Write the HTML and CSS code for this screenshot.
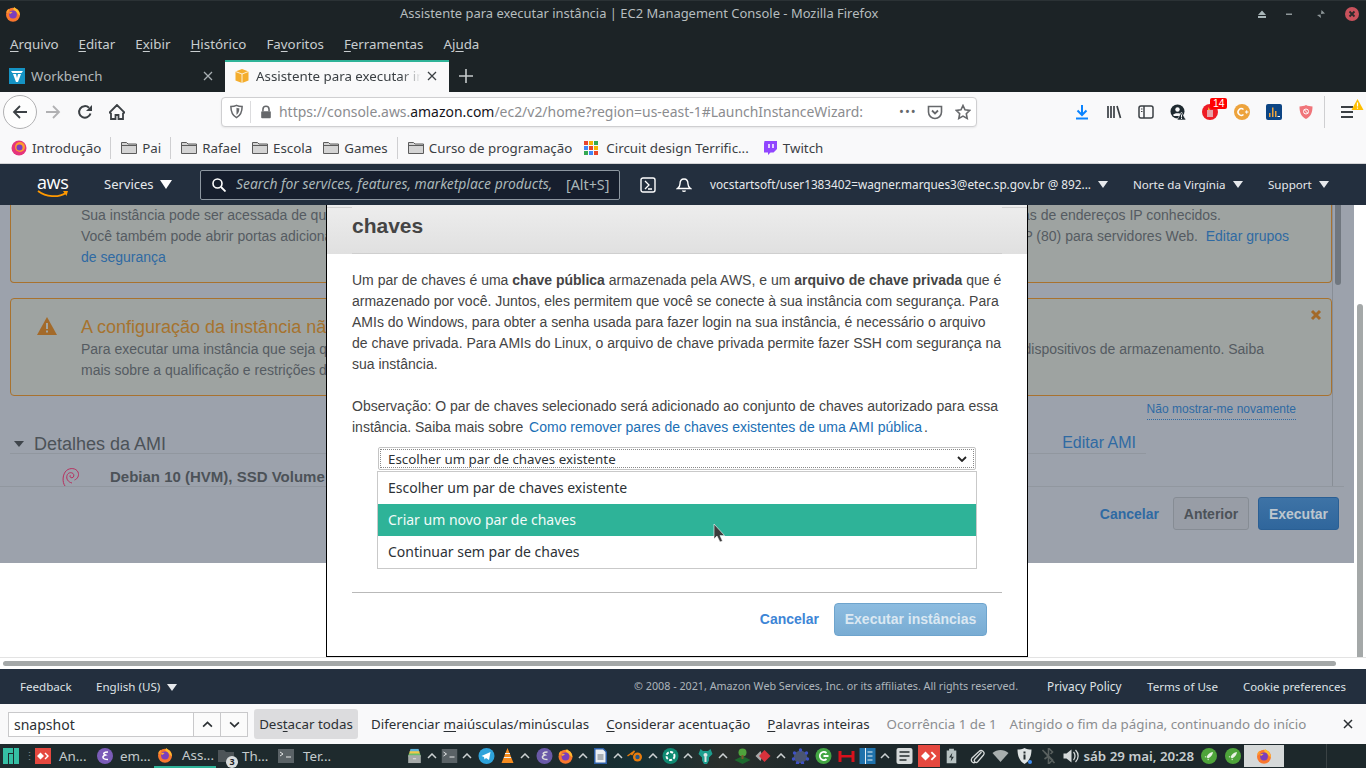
FILE: index.html
```html
<!DOCTYPE html>
<html lang="pt-BR">
<head>
<meta charset="utf-8">
<title>Assistente para executar instância</title>
<link rel="stylesheet" href="styles.css">
</head>
<body>
<svg class="defs" width="0" height="0">
  <symbol id="ff" viewBox="0 0 16 16">
    <circle cx="8" cy="8.800" r="7" fill="#f9772e"/>
    <path d="M9.500 1c.8 1.600 2.500 1.700 3.600 3.300 1.200 1.700 1.900 3.600 1.700 5.300L10 5 8 3z" fill="#ffbd2e"/>
    <path d="M1.200 6.500C1.600 4.500 2.800 3.200 4 2.800 3.800 3.500 3.900 4 4.200 4.500L3 7z" fill="#ff9a2e"/>
    <circle cx="8" cy="8.500" r="3.900" fill="#7b3fbd"/>
    <path d="M4 6.500c2-1.200 3-1 3.500-.3L5 8z" fill="#ffb52e"/>
  </symbol>
  <symbol id="folder" viewBox="0 0 16 16">
    <path d="M.5 13.500v-11h5l1.500 1.500h8.500v9.500z" fill="#d4d4d4" stroke="#5c5c5c"/>
    <path d="M.5 5.500h15" stroke="#5c5c5c"/>
  </symbol>
  <symbol id="chev" viewBox="0 0 10 6">
    <path d="M1 5l4-4 4 4" fill="none" stroke="currentColor" stroke-width="1.500"/>
  </symbol>
  <symbol id="rocket" viewBox="0 0 16 16">
    <circle cx="8" cy="8" r="8" fill="#4ea43a"/>
    <path d="M12 4c-3 .3-5 2-6.500 5l1.500 1.500c3-1.500 4.700-3.500 5-6.500zM5 8l-1.500 1 1.500.5zM8 11l-1 1.500-.5-1.500z" fill="#e9f2e5"/>
  </symbol>
  <symbol id="term" viewBox="0 0 16 16">
    <rect width="16" height="14" y="1" fill="#5a6266"/>
    <path d="M2 4l3 2-3 2" fill="none" stroke="#e4e6e6"/>
    <path d="M8 9h5" stroke="#e4e6e6"/>
  </symbol>
  <symbol id="redapp" viewBox="0 0 16 16">
    <rect width="16" height="16" fill="#e5483f"/>
    <path d="M5.500 4.500L2 8l3.500 3.500L9 8zM10.500 4.500L9.500 5.500 12 8l-2.500 2.500 1 1L14 8z" fill="#fff"/>
  </symbol>
  <symbol id="archive" viewBox="0 0 16 18">
    <path d="M3 0h10l1 4H2z" fill="#5fb4d8"/>
    <path d="M2 3h12l1 4H1z" fill="#f0c94a"/>
    <path d="M1 6h14l1 4H0z" fill="#69bf6a"/>
    <rect y="8" width="16" height="10" fill="#a6aaa9"/>
    <rect x="6" y="12" width="4" height="1" fill="#eee"/>
  </symbol>
</svg>

<header class="titlebar">
  <svg class="ic16 tb-logo"><use href="#ff"/></svg>
  <span class="tb-title">Assistente para executar instância | EC2 Management Console - Mozilla Firefox</span>
  <div class="winbtns">
    <svg class="winbtn" viewBox="0 0 10 10"><path d="M5 1.500L9 6H1zM1 7h8v2H1z" fill="#a9b6b8"/></svg>
    <svg class="winbtn" viewBox="0 0 10 10"><path d="M2 4.500h6v1.500H2z" fill="#8e9799"/></svg>
    <svg class="winbtn" viewBox="0 0 10 10"><path d="M1 6l3.500-.5L5 9zM5 5l.5-4L9 4.500z" fill="#8e9799"/></svg>
    <svg class="winbtn winclose" viewBox="0 0 14 14"><circle cx="7" cy="7" r="7" fill="#c9525c"/><path d="M4.500 4.500l5 5m0-5l-5 5" stroke="#2a2a2a" stroke-width="1.800"/></svg>
  </div>
</header>

<nav class="menubar">
  <span><u>A</u>rquivo</span><span><u>E</u>ditar</span><span>E<u>x</u>ibir</span><span><u>H</u>istórico</span><span>Fa<u>v</u>oritos</span><span><u>F</u>erramentas</span><span>Aj<u>u</u>da</span>
</nav>

<div class="tabbar">
  <div class="tab">
    <svg class="ic16" viewBox="0 0 16 16"><rect width="16" height="16" fill="#1593c4"/><path d="M2 3h12l-1.500 2H3.500zM4 6h3l1 4 1-4h3l-3 8H7z" fill="#fff"/></svg>
    <span class="tab-label">Workbench</span>
    <svg class="tab-x" viewBox="0 0 10 10"><path d="M1 1l8 8m0-8l-8 8" stroke="#a9b0b3" stroke-width="1.300"/></svg>
  </div>
  <div class="tab tab-on">
    <svg class="ic16" viewBox="0 0 16 16"><path d="M8 1l6.500 2.500v9L8 15l-6.500-2.500v-9z" fill="#f4ad2d"/><path d="M1.500 3.500L8 6l6.500-2.500M8 6v9" stroke="#fff" fill="none" stroke-width=".8"/></svg>
    <span class="tab-label tab-fade">Assistente para executar instância</span>
    <svg class="tab-x" viewBox="0 0 10 10"><path d="M1 1l8 8m0-8l-8 8" stroke="#3b4044" stroke-width="1.300"/></svg>
  </div>
  <svg class="tab-plus" viewBox="0 0 14 14"><path d="M7 0v14M0 7h14" stroke="#c5cacb" stroke-width="1.600"/></svg>
</div>

<div class="navbar">
  <div class="backbtn"><svg class="ic16" viewBox="0 0 16 16"><path d="M15 8H2M8 2L2 8l6 6" fill="none" stroke="#3b4044" stroke-width="1.800"/></svg></div>
  <svg class="ic16 nav-fwd" viewBox="0 0 16 16"><path d="M1 8h13M8 2l6 6-6 6" fill="none" stroke="#b1b1b3" stroke-width="1.800"/></svg>
  <svg class="ic16 nav-rel" viewBox="0 0 16 16"><path d="M13.500 9.500A5.800 5.800 0 1 1 12 3.800" fill="none" stroke="#3b4044" stroke-width="2"/><path d="M15 1v6H9z" fill="#3b4044"/></svg>
  <svg class="ic16 nav-home" viewBox="0 0 16 16"><path d="M8 1L.5 8.500 2 9.500V15h4.500v-4h3v4H14V9.500l1.500-1z" fill="none" stroke="#3b4044" stroke-width="1.800"/></svg>
  <div class="urlbar">
    <svg class="ic16 url-shield" viewBox="0 0 16 16"><path d="M8 1.500c2 1 4 1.200 6 1.200 0 5-1 9.300-6 11.800-5-2.500-6-6.800-6-11.800 2 0 4-.2 6-1.200z" fill="none" stroke="#66686b" stroke-width="1.600"/><path d="M8 4c1 .5 2 .6 3 .6 0 3-.6 5.400-3 7z" fill="#66686b"/></svg>
    <span class="url-sep"></span>
    <svg class="ic16 url-lock" viewBox="0 0 16 16"><path d="M4.500 7V5a3.500 3.500 0 0 1 7 0v2" fill="none" stroke="#66686b" stroke-width="1.800"/><rect x="2.500" y="7" width="11" height="8" rx="1" fill="#66686b"/></svg>
    <span class="url-text">https://console.aws.<b>amazon.com</b>/ec2/v2/home?region=us-east-1#LaunchInstanceWizard:</span>
    <span class="url-dots">•••</span>
    <svg class="ic16 url-pocket" viewBox="0 0 16 16"><path d="M1.500 2.500h13V8a6.500 6.500 0 0 1-13 0z" fill="none" stroke="#66686b" stroke-width="1.600"/><path d="M5 6.500l3 3 3-3" fill="none" stroke="#66686b" stroke-width="1.800"/></svg>
    <svg class="ic16 url-star" viewBox="0 0 16 16"><path d="M8 1.500l2 4.300 4.700.6-3.400 3.300.9 4.700L8 12.100l-4.200 2.300.9-4.700L1.300 6.400 6 5.800z" fill="none" stroke="#66686b" stroke-width="1.600"/></svg>
  </div>
  <div class="tools">
    <svg class="ic16" viewBox="0 0 16 16"><path d="M8 1v9M3.500 6.500L8 11l4.500-4.500" fill="none" stroke="#0a84ff" stroke-width="2"/><path d="M2 14.500h12" stroke="#0a84ff" stroke-width="2"/></svg>
    <svg class="ic16" viewBox="0 0 16 16"><path d="M2 2v12M5 2v12M8 2v12M11 2l3.500 12" stroke="#3b4044" stroke-width="1.700" fill="none"/></svg>
    <svg class="ic16" viewBox="0 0 16 16"><rect x="1" y="2" width="14" height="12" rx="2" fill="none" stroke="#3b4044" stroke-width="1.500"/><path d="M6 2v12" stroke="#3b4044" stroke-width="1.500"/><path d="M3 5h1.500M3 7.500h1.500" stroke="#3b4044"/></svg>
    <svg class="ic16" viewBox="0 0 16 16"><circle cx="7.500" cy="7.500" r="7" fill="#1f2a30"/><circle cx="7.500" cy="5.500" r="2.200" fill="#f9f9fa"/><path d="M3 11c1-2.500 8-2.500 9 0l-1 1H4z" fill="#f9f9fa"/><path d="M11.500 8l4.500 8H7z" fill="#1f2a30" stroke="#f9f9fa" stroke-width=".6"/><path d="M11 10.500h1v3h-1zM11 14h1v1h-1z" fill="#f9f9fa"/></svg>
    <span class="tool-badge"><svg class="ic16" viewBox="0 0 16 16"><circle cx="8" cy="8" r="8" fill="#ee1c25"/><rect x="5" y="6" width="6" height="7" fill="#e7a3a8"/><path d="M6.500 3L8 6 6 6z" fill="#f5c23b"/></svg><b class="badge14">14</b></span>
    <svg class="ic16" viewBox="0 0 16 16"><circle cx="8" cy="8" r="8" fill="#eda33c"/><path d="M9.500 5.500a3.300 3.300 0 1 0 0 5" fill="none" stroke="#fff" stroke-width="1.500"/><path d="M11 8h3.500M12.700 6.300v3.400" stroke="#fff"/></svg>
    <svg class="ic16" viewBox="0 0 16 16"><rect width="16" height="16" rx="2" fill="#0d4584"/><path d="M3 13V9h1.500v4zM6 13V3.500h1.500V13zM9 13V7h1.500v6z" fill="#eda33c"/><path d="M11.500 13H14v-1h-2.500z" fill="#fff"/></svg>
    <svg class="ic16" viewBox="0 0 16 16"><path d="M8 1c2 1 4 1.300 6.500 1.500C14.500 8 13 12.500 8 15 3 12.500 1.500 8 1.500 2.500 4 2.300 6 2 8 1z" fill="#f0757a"/><circle cx="8" cy="7.500" r="2.500" fill="none" stroke="#fff"/><path d="M6.300 5.800l3.400 3.400" stroke="#fff"/></svg>
    <span class="tool-sep"></span>
    <span class="tool-menu"><svg class="ic16" viewBox="0 0 16 16"><path d="M2 3h12M2 8h12M2 13h12" stroke="#3b4044" stroke-width="1.800"/></svg><svg class="menu-warn" viewBox="0 0 12 12"><path d="M6 0l6 11H0z" fill="#ffbf00"/><path d="M5.400 3.500h1.200v4H5.400zM5.400 8.500h1.200v1.300H5.400z" fill="#fff"/></svg></span>
  </div>
</div>

<div class="bookmarks">
  <span class="bm"><svg class="ic16" viewBox="0 0 16 16"><circle cx="8" cy="8" r="7.500" fill="#e5357c"/><circle cx="9" cy="7" r="5" fill="#ff9a2e"/><circle cx="8.500" cy="7.500" r="3" fill="#7b3fbd"/></svg>Introdução</span>
  <span class="bm-sep"></span>
  <span class="bm"><svg class="ic16"><use href="#folder"/></svg>Pai</span>
  <span class="bm-sep"></span>
  <span class="bm"><svg class="ic16"><use href="#folder"/></svg>Rafael</span>
  <span class="bm"><svg class="ic16"><use href="#folder"/></svg>Escola</span>
  <span class="bm"><svg class="ic16"><use href="#folder"/></svg>Games</span>
  <span class="bm-sep"></span>
  <span class="bm"><svg class="ic16"><use href="#folder"/></svg>Curso de programação</span>
  <span class="bm bm-wide"><svg class="ic16" viewBox="0 0 16 16"><path d="M1 1h4v4H1z" fill="#e8452c"/><path d="M6 1h4v4H6z" fill="#f5b400"/><path d="M11 1h4v4h-4z" fill="#34a853"/><path d="M1 6h4v4H1z" fill="#4285f4"/><path d="M6 6h4v4H6z" fill="#e8452c"/><path d="M11 6h4v4h-4z" fill="#f5b400"/><path d="M1 11h4v4H1z" fill="#34a853"/><path d="M6 11h4v4H6z" fill="#4285f4"/><path d="M11 11h4v4h-4z" fill="#e8452c"/></svg>Circuit design Terrific...</span>
  <span class="bm bm-tw"><svg class="ic16" viewBox="0 0 16 16"><path d="M2.500 1H15v8l-3.500 3.500H8.500l-2.500 2.500v-2.500H2V3.500z" fill="#9146ff"/><path d="M7 4v4M11 4v4" stroke="#fff" stroke-width="1.500"/></svg>Twitch</span>
</div>

<div class="awsnav">
  <span class="aws-logo"><span class="aws-word">aws</span><svg class="aws-smile" viewBox="0 0 32 9"><path d="M1 1c8 6 20 7 28 2" fill="none" stroke="#f90" stroke-width="1.800"/><path d="M26 1l5 0-1.500 5z" fill="#f90"/></svg></span>
  <span class="aws-services">Services<i class="tri-w"></i></span>
  <div class="aws-search">
    <svg class="aws-mag" viewBox="0 0 14 14"><circle cx="5.500" cy="5.500" r="4.500" fill="none" stroke="#fff" stroke-width="1.600"/><path d="M9 9l4.500 4.500" stroke="#fff" stroke-width="1.800"/></svg>
    <em>Search for services, features, marketplace products,</em>
    <span class="aws-key">[Alt+S]</span>
  </div>
  <svg class="ic16 aws-shell" viewBox="0 0 16 16"><rect x="1" y="1" width="14" height="14" rx="2" fill="none" stroke="#fff" stroke-width="1.400"/><path d="M5 4l4 4-4 4M8 12h4" fill="none" stroke="#fff" stroke-width="1.300"/></svg>
  <svg class="ic16 aws-bell" viewBox="0 0 16 16"><path d="M8 2c-3 0-4 2.500-4 5 0 2-1 3.500-2.500 4.500h13C13 10.500 12 9 12 7c0-2.500-1-5-4-5zM6.500 13.500c.5 1.200 2.500 1.200 3 0" fill="none" stroke="#fff" stroke-width="1.400"/></svg>
  <span class="aws-acct">vocstartsoft/user1383402=wagner.marques3@etec.sp.gov.br @ 892...</span><i class="tri-s aws-t1"></i>
  <span class="aws-reg">Norte da Virgínia</span><i class="tri-s aws-t2"></i>
  <span class="aws-sup">Support</span><i class="tri-s aws-t3"></i>
</div>

<main class="viewport">
  <section class="wizard">
    <div class="wiz-main">
      <div class="alert alert-one">
        <p class="row"><span>Sua instância pode ser acessada de qualquer endereço IP.</span><span>as de endereços IP conhecidos.</span></p>
        <p class="row row-b"><span>Você também pode abrir portas adicionais no grupo.</span><span>P (80) para servidores Web. &nbsp;<a>Editar grupos</a></span></p>
        <p><a>de segurança</a></p>
      </div>
      <div class="alert alert-two">
        <svg class="warn-ic" viewBox="0 0 20 18"><path d="M10 0l10 18H0z" fill="#a36a2a"/><path d="M9 6h2v6H9zM9 13.500h2v2H9z" fill="#a2a6a3"/></svg>
        <svg class="close-ic" viewBox="0 0 12 12"><path d="M2 2l8 8m0-8l-8 8" stroke="#a36a2a" stroke-width="3"/></svg>
        <h3>A configuração da instância não atende aos requisitos</h3>
        <p class="row row-c"><span>Para executar uma instância que seja qualificada para o nível gratuito,</span><span>dispositivos de armazenamento. Saiba</span></p>
        <p>mais sobre a qualificação e restrições do nível gratuito da AWS.</p>
      </div>
      <div class="nomore"><a>Não mostrar-me novamente</a></div>
      <div class="ami-head"><i class="tri-d"></i><h2>Detalhes da AMI</h2><a>Editar AMI</a></div>
      <div class="ami-row">
        <svg class="deb" viewBox="0 0 18 20"><path d="M10 16C6 15 4 12 5 8.500 6 5.500 9 5 11 6.500c1.500 1.300 1 4-1 4.300-1.800.2-2.500-1.500-1.700-2.500M3 19C0 15 .5 7 4.500 3.500 8 .5 14 1 16 5c1.500 3.500-.5 7-3.500 8" fill="none" stroke="#b7305f" stroke-width="1"/></svg>
        <b>Debian 10 (HVM), SSD Volume Type</b>
      </div>
    </div>
    <div class="wiz-foot">
      <a class="foot-cancel">Cancelar</a>
      <span class="btn-prev">Anterior</span>
      <span class="btn-run">Executar</span>
    </div>
  </section>
  <span class="vbar-in"></span>
  <span class="vbar"></span>

  <div class="modal">
    <div class="modal-head"><h1>chaves</h1></div>
    <div class="modal-body">
      <p>Um par de chaves é uma <b>chave pública</b> armazenada pela AWS, e um <b>arquivo de chave privada</b> que é armazenado por você. Juntos, eles permitem que você se conecte à sua instância com segurança. Para AMIs do Windows, para obter a senha usada para fazer login na sua instância, é necessário o arquivo de chave privada. Para AMIs do Linux, o arquivo de chave privada permite fazer SSH com segurança na sua instância.</p>
      <p class="note">Observação: O par de chaves selecionado será adicionado ao conjunto de chaves autorizado para essa instância. Saiba mais sobre <a>Como remover pares de chaves existentes de uma AMI pública</a>.</p>
      <div class="select">
        <div class="sel-inner"><span>Escolher um par de chaves existente</span><svg class="sel-chev" viewBox="0 0 10 6"><path d="M1 1l4 4 4-4" fill="none" stroke="#222" stroke-width="1.800"/></svg></div>
        <ul class="listbox">
          <li>Escolher um par de chaves existente</li>
          <li class="sel-on">Criar um novo par de chaves</li>
          <li>Continuar sem par de chaves</li>
        </ul>
      </div>
      <div class="modal-foot">
        <a class="m-cancel">Cancelar</a>
        <span class="m-run">Executar instâncias</span>
      </div>
    </div>
  </div>
  <svg class="cursor" viewBox="0 0 13 22"><path d="M1 1v15l3-3 3 6 2.500-1-2.500-5.500h4.500z" fill="#3c3c3c" stroke="#fff" stroke-width=".6"/></svg>
</main>

<div class="hscroll"><span></span></div>

<footer class="awsfoot">
  <span class="ft-fb">Feedback</span>
  <span class="ft-lang">English (US)<i class="tri-s ft-t"></i></span>
  <span class="ft-copy">© 2008 - 2021, Amazon Web Services, Inc. or its affiliates. All rights reserved.</span>
  <span class="ft-l1">Privacy Policy</span>
  <span class="ft-l2">Terms of Use</span>
  <span class="ft-l3">Cookie preferences</span>
</footer>

<div class="findbar">
  <span class="find-input">snapshot</span>
  <span class="find-btn"><svg class="ic-chev"><use href="#chev"/></svg></span>
  <span class="find-btn"><svg class="ic-chev flip"><use href="#chev"/></svg></span>
  <span class="find-hl">Des<u>t</u>acar todas</span>
  <span class="find-opt">Diferenciar <u>m</u>aiúsculas/minúsculas</span>
  <span class="find-opt"><u>C</u>onsiderar acentuação</span>
  <span class="find-opt"><u>P</u>alavras inteiras</span>
  <span class="find-info">Ocorrência 1 de 1</span>
  <span class="find-info find-info2">Atingido o fim da página, continuando do início</span>
  <svg class="find-x" viewBox="0 0 10 10"><path d="M1 1l8 8m0-8L1 9" stroke="#2a2e31" stroke-width="1.500"/></svg>
</div>

<div class="taskbar">
  <svg class="ic16 tk-man" viewBox="0 0 16 16"><path d="M0 0h10v5H5v11H0zM6 6h4v10H6zM11 0h5v16h-5z" fill="#35bfa4"/></svg>
  <span class="tk-dots">⋮</span>
  <span class="tk-app tk-a1"><svg class="ic16"><use href="#redapp"/></svg><span>An...</span></span>
  <span class="tk-app tk-a2"><svg class="ic16" viewBox="0 0 16 16"><circle cx="8" cy="8" r="8" fill="#7b5cb8"/><path d="M11 4C7 4 5 5.500 8.500 7 5 8 4.500 11.500 11 11.500" fill="none" stroke="#fff" stroke-width="1.500"/></svg><span>em...</span></span>
  <span class="tk-app tk-a3 tk-active"><svg class="ic16"><use href="#ff"/></svg><span>Ass...</span></span>
  <span class="tk-app tk-a4"><svg class="ic16" viewBox="0 0 16 16"><path d="M0 2h6l2 2h8v10H0z" fill="#4d5457"/></svg><b class="tk-num">3</b><span>Th...</span></span>
  <span class="tk-app tk-a5"><svg class="ic16"><use href="#term"/></svg><span>Ter...</span></span>
  <div class="tray">
    <svg class="ti" viewBox="-2.500 -1 21 20"><use href="#archive" width="16" height="18"/></svg>
    <svg class="tc"><use href="#chev"/></svg>
    <svg class="ti" viewBox="-2.500 0 21 16"><use href="#term" width="16" height="16"/></svg>
    <svg class="tc"><use href="#chev"/></svg>
    <svg class="ti g" viewBox="-2.500 0 21 16"><circle cx="8" cy="8" r="8" fill="#2ea3db"/><path d="M3 8l9-4-1.500 8-3-2-1.500 1.500L5.500 9z" fill="#fff"/></svg>
    <svg class="ti" viewBox="-2.500 0 21 16"><path d="M8 0l2 5H6zM5.500 6h5l1 3h-7zM4 10h8l2 5H2z" fill="#f58b1f"/><path d="M5.500 5.500h5M4.300 9.500h7.400" stroke="#f3f3f3"/></svg>
    <svg class="tc"><use href="#chev"/></svg>
    <svg class="ti g" viewBox="-2.500 0 21 16"><circle cx="8" cy="8" r="8" fill="#6a59a8"/><path d="M11 4C7 4 5 5.500 8.500 7 5 8 4.500 11.500 11 11.500" fill="none" stroke="#ddd" stroke-width="1.500"/></svg>
    <svg class="ti" viewBox="-2.500 0 21 16"><use href="#ff" width="16" height="16"/></svg>
    <svg class="tc"><use href="#chev"/></svg>
    <svg class="ti" viewBox="-2.500 0 21 16"><path d="M1.500 0H11l3.500 3.500V16h-13z" fill="#2d5fa8"/><path d="M3 1.500h7.500l2.500 2.500v10.500H3z" fill="#eceff2"/><path d="M5 7h6M5 9h6M5 11h6" stroke="#6a7278"/></svg>
    <svg class="tc"><use href="#chev"/></svg>
    <svg class="ti" viewBox="-2.500 0 21 16"><path d="M0 8l7-5-3 4" fill="none" stroke="#e87d0d" stroke-width="1.500"/><circle cx="10" cy="9" r="4.500" fill="#e87d0d"/><circle cx="10" cy="9" r="2.200" fill="#265787"/></svg>
    <svg class="tc"><use href="#chev"/></svg>
    <svg class="ti" viewBox="-2.500 0 21 16"><circle cx="8" cy="8" r="8" fill="#0f8a72"/><circle cx="8" cy="8" r="4" fill="none" stroke="#fff" stroke-width="2" stroke-dasharray="3 1.500"/></svg>
    <svg class="tc"><use href="#chev"/></svg>
    <svg class="ti" viewBox="-2.500 0 21 16"><path d="M3 1l2.500 2h5L13 1l2 5-3.500 3.500v3L9.500 16h-3l-2-3.500v-3L1 6z" fill="#1d9e8e"/><circle cx="8" cy="7" r="2" fill="#dfe6e6"/><path d="M7 9h2v5H7z" fill="#dfe6e6"/></svg>
    <svg class="tc"><use href="#chev"/></svg>
    <svg class="ti g" viewBox="-2.500 0 21 16"><path d="M8 8L16 12 8 16 0 12z" fill="#1c6a2d"/><circle cx="8" cy="4.500" r="4" fill="#4fa33c"/><path d="M7 7h2v4H7z" fill="#7a5a2c"/></svg>
    <svg class="ti" viewBox="-2.500 0 21 16"><path d="M5 3L0 8l5 5 2-5z" fill="#a9a9a9"/><path d="M9 2L3.500 8 9 14l6-6z" fill="#d8323c"/></svg>
    <svg class="tc"><use href="#chev"/></svg>
    <svg class="ti g" viewBox="-2.500 0 21 16"><path d="M8 2l6 3 1 6-5 4H5l-4-4 1-6z" fill="#4a5570"/><g fill="#3f51c5"><circle cx="8" cy="2" r="1.700"/><circle cx="14" cy="5" r="1.700"/><circle cx="15" cy="11" r="1.700"/><circle cx="1" cy="11" r="1.700"/><circle cx="2" cy="5" r="1.700"/><circle cx="5" cy="15" r="1.700"/><circle cx="10" cy="15" r="1.700"/></g></svg>
    <svg class="ti g" viewBox="-2.500 0 21 16"><circle cx="8" cy="8" r="8" fill="#43a643"/><path d="M11 5a4 4 0 1 0 0 6M8 8h5" fill="none" stroke="#fff" stroke-width="1.800"/></svg>
    <svg class="ti g" viewBox="-2.500 0 21 16"><path d="M0 3h3v4h10V3h3v11h-3V9.500H3V14H0z" fill="#d8111c"/></svg>
    <svg class="ti" viewBox="-2.500 0 21 16"><rect width="16" height="16" fill="#1f72ac"/><path d="M6 0v16" stroke="#e8f0f5"/><path d="M8 4h5M8 8h5M8 12h5" stroke="#e8f0f5"/></svg>
    <svg class="tc"><use href="#chev"/></svg>
    <svg class="ti g" viewBox="-2.500 0 21 16"><rect width="16" height="16" rx="2" fill="#d6dada"/><path d="M3 4h10M3 8h10M3 12h7" stroke="#252c2e" stroke-width="1.700"/></svg>
    <svg class="ti tw" viewBox="0 0 22 22"><rect width="22" height="22" fill="#e5483f"/><path d="M7.500 6.500L3 11l4.500 4.500L12 11zM14 6.500l-1.300 1.300L16 11l-3.300 3.200 1.300 1.300L18.500 11z" fill="#fff"/></svg>
    <svg class="ti t-bat" viewBox="-2.500 -1 21 20"><path d="M5 0h6v2h3v16H2V2h3z" fill="#b7c2c2"/><path d="M9 5L5 11h3l-1 5 4-6H8z" fill="#1f2a2c"/></svg>
    <svg class="ti t-clip" viewBox="-2.500 0 21 16"><path d="M13 4L6 11.500a2 2 0 0 0 3 2.500l6-7c2-3-2-6-4.500-3.500L3.500 10c-2 3 1 6 3.500 4" fill="none" stroke="#d6dada" stroke-width="1.300"/></svg>
    <svg class="ti t3" viewBox="-2.500 0 21 16"><path d="M8 14L0 5c4.500-4 11.500-4 16 0z" fill="#a8aeae"/></svg>
    <svg class="ti t3" viewBox="-2.500 0 21 16"><path d="M8 0c2 1 4.500 1.500 7 1.500C15 8 13 13 8 16 3 13 1 8 1 1.500 3.500 1.500 6 1 8 0z" fill="#dfe3e3"/><path d="M7 3.500h2v2H7zM7 6.500h2v5H7z" fill="#252c2e"/><circle cx="13.500" cy="14" r="2" fill="#3f8df0"/></svg>
    <svg class="ti t3" viewBox="-2.500 0 21 16"><path d="M4 4l8 8-4 4V8L4 11M8 8V0l4 4-2 2" fill="none" stroke="#59605f" stroke-width="1.600"/><path d="M2 2l12 13" stroke="#59605f" stroke-width="1.600"/></svg>
    <svg class="ti t-snd" viewBox="-2.500 0 21 16"><path d="M1 5.500h3L9 1.500v13l-5-4H1z" fill="#d6dada"/><path d="M11 4c2 2 2 6 0 8M13 2c3.500 3.500 3.500 8.500 0 12" fill="none" stroke="#d6dada" stroke-width="1.300"/></svg>
    <span class="tk-clock">sáb 29 mai, 20:28</span>
    <svg class="ti tr"><use href="#rocket" width="16" height="16"/></svg>
    <svg class="ti tr tr2"><use href="#rocket" width="16" height="16"/></svg>
    <span class="tk-win"><svg class="ic16"><use href="#ff"/></svg></span>
    <span class="tk-div"></span>
  </div>
</div>
</body>
</html>
```

FILE: styles.css
```css
* { box-sizing: border-box; }
html, body { margin: 0; padding: 0; width: 1366px; height: 768px; overflow: hidden; background: #fff; }
body { font: 13.330px/1.2 "Noto Sans", sans-serif; color: #222; }
p, h1, h2, h3, ul { margin: 0; padding: 0; font-weight: normal; }
u { text-underline-offset: 2px; }
a { color: inherit; }
.defs { position: absolute; }
.ic16 { width: 16px; height: 16px; flex: none; display: block; }

.titlebar { height: 34px; background: #1c2326; border-top: 1px solid #2b3235; display: flex; align-items: flex-start; position: relative; padding: 5px 0 0 5px; }
.tb-title { position: absolute; left: 400px; top: 5px; color: #b6bdbf; white-space: nowrap; font-size: 12.950px; }
.winbtns { margin-left: auto; display: flex; align-items: center; margin-right: 7px; height: 16px; }
.winbtn { width: 10px; height: 10px; margin-right: 17px; }
.winbtns .winbtn:nth-child(2) { margin-right: 22px; }
.winbtns .winbtn:nth-child(3) { margin-right: 19px; }
.winclose { width: 14px; height: 14px; margin-right: 0; }

.menubar { height: 26px; background: #1c2326; color: #c9ced0; display: flex; gap: 20px; padding: 2px 0 0 10px; white-space: nowrap; }

.tabbar { height: 32px; background: #1c2326; display: flex; align-items: stretch; }
.tab { width: 225px; display: flex; align-items: center; padding: 0 12px 0 9px; color: #b3b9bb; }
.tab-on { width: 224px; background: #f9f9fa; border-top: 2px solid #2eb398; color: #3b4044; padding-bottom: 2px; }
.tab-label { margin-left: 6px; flex: 1; white-space: nowrap; overflow: hidden; }
.tab-fade { -webkit-mask-image: linear-gradient(90deg, #000 88%, transparent); mask-image: linear-gradient(90deg, #000 88%, transparent); margin-right: 0; }
.tab-x { width: 10px; height: 10px; flex: none; margin-left: 6px; }
.tab-plus { width: 14px; height: 14px; align-self: center; margin-left: 10px; }

.navbar { height: 39px; background: #f9f9fa; display: flex; align-items: center; padding-left: 3px; }
.backbtn { width: 34px; height: 34px; border: 1px solid #b1b1b3; border-radius: 50%; background: #fdfdfd; display: flex; align-items: center; justify-content: center; }
.nav-fwd { margin-left: 8px; width: 16px; }
.nav-rel { margin-left: 16px; }
.nav-home { margin-left: 16px; }
.urlbar { width: 756px; height: 30px; margin-left: 96px; background: #fff; border: 1px solid #cfcfd1; border-radius: 4px; display: flex; align-items: center; padding-left: 7px; white-space: nowrap; box-shadow: 0 1px 2px rgba(0,0,0,.08); }
.url-shield { width: 15px; height: 15px; }
.url-sep { width: 1px; height: 22px; background: #dcdcde; margin-left: 6px; }
.url-lock { width: 14px; height: 16px; margin-left: 8px; }
.url-text { margin-left: 6px; padding-top: 2px; font-size: 13.950px; color: #8b8c8f; width: 620px; overflow: hidden; }
.url-text b { font-weight: normal; color: #15141a; }
.url-dots { color: #66686b; font-size: 13px; letter-spacing: 1px; width: 26px; }
.url-pocket { margin-left: 2px; }
.url-star { margin-left: 12px; }
.tools { display: flex; align-items: center; gap: 16px; margin-left: 97px; }
.tool-badge { position: relative; display: block; width: 16px; height: 16px; }
.badge14 { position: absolute; left: 8px; top: -6px; background: #f00; color: #fff; font: 10.500px/11px "Liberation Sans", sans-serif; padding: 0 2px 0 3px; border-radius: 2px; }
.tool-sep { width: 1px; height: 32px; background: #cfcfd1; margin-left: -6px; }
.tool-menu { position: relative; display: block; margin-left: -2px; }
.menu-warn { position: absolute; left: 12px; top: -5px; width: 13px; height: 12px; }

.bookmarks { height: 33px; background: #f9f9fa; border-bottom: 1px solid #d4d4d6; display: flex; align-items: center; padding: 2px 0 0 11px; color: #3b4044; white-space: nowrap; }
.bm { display: flex; align-items: center; gap: 5px; margin-right: 11px; }
.bm .ic16 { width: 16px; }
.bm-sep { width: 1px; height: 22px; background: #cfcfd1; margin: 0 10px 0 -2px; }
.bm-wide { gap: 7px; margin-right: 13px; }
.bm-tw { gap: 5px; }

.awsnav { height: 41px; background: #232f3e; color: #e6e9ec; display: flex; align-items: center; position: relative; font-size: 12px; white-space: nowrap; padding-left: 37px; }
.aws-logo { width: 32px; height: 30px; display: block; position: relative; flex: none; }
.aws-word { position: absolute; left: 0; top: 3px; font: 18px/18px "Open Sans", sans-serif; color: #fff; letter-spacing: -.4px; }
.aws-smile { position: absolute; left: 0; top: 20px; width: 32px; height: 9px; }
.aws-services { margin-left: 35px; font-size: 13px; display: flex; align-items: center; gap: 6px; width: 96px; }
.tri-w { width: 0; height: 0; border: 6px solid transparent; border-top: 9px solid #fff; border-bottom: 0; display: block; }
.tri-s { width: 0; height: 0; border: 5px solid transparent; border-top: 7px solid #e6e9ec; border-bottom: 0; display: block; flex: none; }
.aws-search { width: 420px; height: 30px; background: #161e2d; border: 1px solid #8d96a0; border-radius: 2px; display: flex; align-items: center; padding-left: 11px; color: #aab7b8; font-size: 13.900px; }
.aws-mag { width: 14px; height: 14px; }
.aws-search em { margin-left: 10px; width: 330px; }
.aws-key { font-size: 14.300px; }
.aws-shell { margin-left: 20px; }
.aws-bell { margin-left: 20px; }
.aws-acct { margin-left: 18px; font-size: 11.780px; width: 387px; }
.aws-t1 { margin-left: 1px; }
.aws-reg { margin-left: 25px; width: 100px; font-size: 11.600px; }
.aws-t2 { margin-left: 0; }
.aws-sup { margin-left: 25px; width: 51px; font-size: 11.600px; }
.aws-t3 { margin-left: 0; }

.viewport { position: relative; height: 452px; background: #fff; font: 14px/21px "Liberation Sans", sans-serif; }
.wizard { width: 1354px; height: 358px; background: #9ca2ac; color: #555b61; overflow: hidden; }
.wizard a { color: #2f6aa3; }
.wiz-main { height: 281px; width: 1333px; border-right: 1px solid #888e96; padding-left: 10px; overflow: hidden; }
.alert { width: 1322px; background: #9ea3a1; border: 1px solid #a8722f; padding-left: 70px; position: relative; border-radius: 0 0 4px 4px; }
.alert-one { height: 78px; border-top: 0; }
.alert-two { height: 98px; margin-top: 15px; border-radius: 4px; padding-top: 17px; }
.alert h3 { color: #a6732f; font-size: 18px; line-height: 22px; white-space: nowrap; }
.row { display: flex; justify-content: space-between; white-space: nowrap; padding-right: 110px; }
.row-b { padding-right: 42px; }
.row-c { padding-right: 67px; margin-top: 1px; }
.warn-ic { position: absolute; left: 26px; top: 18px; width: 20px; height: 18px; }
.close-ic { position: absolute; right: 9px; top: 10px; width: 12px; height: 12px; }
.nomore { font-size: 12px; line-height: 18px; text-align: right; padding: 4px 36px 0 0; }
.nomore a { border-bottom: 1px dotted #2f6aa3; padding-bottom: 3px; }
.ami-head { display: flex; align-items: flex-end; width: 1136px; border-bottom: 1px solid #91979f; height: 35px; margin-top: 1px; }
.ami-head h2 { font-size: 18px; line-height: 21px; margin: 0 0 -2px 10px; color: #4c5258; flex: 1; }
.ami-head a { font-size: 16px; margin: 0 10px 0 0; }
.tri-d { width: 0; height: 0; border: 5.500px solid transparent; border-top: 6px solid #3f454b; border-bottom: 0; margin: 0 0 6px 4px; display: block; }
.ami-row { display: flex; align-items: flex-start; height: 32px; color: #4c5258; padding: 12px 0 0 52px; font-size: 15px; white-space: nowrap; }
.deb { width: 18px; height: 20px; margin: 1px 30px 0 0; flex: none; }
.wiz-foot { height: 77px; display: flex; align-items: flex-start; justify-content: flex-end; border-top: 1px solid #91979f; margin-right: 10px; padding: 10px 5px 0 0; font-weight: bold; }
.foot-cancel { margin-top: 7px; margin-right: 14px; }
.btn-prev { width: 76px; height: 33px; border: 1px solid #868c94; border-radius: 3px; background: #989da6; color: #4c5258; text-align: center; line-height: 32px; }
.btn-run { width: 81px; height: 33px; margin-left: 9px; border: 1px solid #2a5f94; border-radius: 3px; background: linear-gradient(#3e73a6, #2f669c); color: #bcc6ce; text-align: center; line-height: 32px; }
.vbar-in { position: absolute; left: 1335px; top: 0; width: 6px; height: 80px; background: #70777f; border-radius: 0 0 3px 3px; }
.vbar { position: absolute; left: 1357px; top: 99px; width: 6px; height: 353px; background: #a4a8a8; border-radius: 3px 3px 0 0; }

.modal { position: absolute; left: 326px; top: 0; width: 702px; height: 452px; background: #fff; border: 1px solid #000; border-top: 0; color: #444; }
.modal-head { height: 49px; padding: 0 25px; background: linear-gradient(#d2d2d2, #d2d2d2) left 0 top 2px / 25px 1px no-repeat, linear-gradient(#d2d2d2, #d2d2d2) right 0 top 2px / 25px 1px no-repeat, linear-gradient(#ededed, #e0e0e0); }
.modal-head h1 { height: 49px; padding-top: 8px; font-size: 21px; line-height: 26px; font-weight: bold; color: #444; border-bottom: 1px solid #cfcfcf; }
.modal-body { padding: 16px 25px 0; }
.modal-body a { color: #1b6fb5; }
.note { margin-top: 21px; }
.note a { margin: 0 2px; }
.select { position: relative; margin: 9px 25px 0 26px; width: 598px; height: 23px; border: 1px solid #c4c4c4; border-radius: 2px; padding: 1px; font: 13.330px/18px "Noto Sans", sans-serif; color: #2d3236; }
.sel-inner { height: 19px; border: 1px dotted #888; display: flex; align-items: center; justify-content: space-between; padding: 0 6px 0 7px; }
.sel-chev { width: 10px; height: 6px; }
.listbox { position: absolute; left: -2px; top: 23px; width: 600px; height: 98px; background: #fff; border: 1px solid #c9c9c9; list-style: none; font-size: 14px; color: #2d3236; z-index: 1; }
.listbox li { height: 32px; line-height: 32px; padding-left: 10px; }
.sel-on { background: #2eb398; color: #f2fbf8; }
.modal-foot { margin-top: 122px; border-top: 1px solid #b9b9b9; height: 64px; display: flex; align-items: flex-start; justify-content: flex-end; padding: 10px 15px 0 0; font-weight: bold; }
.m-cancel { margin: 6px 15px 0 0; color: #3d85d6 !important; }
.m-run { width: 153px; height: 33px; background: linear-gradient(#8cbce0, #79acd3); border: 1px solid #6ea4cd; border-radius: 4px; color: #dbe8f2; text-align: center; line-height: 30px; }
.cursor { position: absolute; left: 713px; top: 318px; width: 13px; height: 22px; z-index: 2; }

.hscroll { height: 12px; background: #fff; border-top: 1px solid #e3e3e3; padding: 3px 30px 0 3px; }
.hscroll span { display: block; height: 5px; background: #a4a8a8; border-radius: 3px; }

.awsfoot { height: 35px; background: #232f3e; color: #dfe3e6; font-size: 11.600px; display: flex; align-items: center; white-space: nowrap; padding-left: 20px; }
.ft-fb { width: 51px; }
.ft-lang { margin-left: 25px; display: flex; align-items: center; gap: 7px; width: 86px; }
.ft-t { margin-top: 1px; }
.ft-copy { margin-left: 452px; color: #aeb5bb; width: 413px; font-size: 10.750px; }
.ft-l1 { width: 100px; font-size: 11.800px; }
.ft-l2 { width: 96px; }
.ft-l3 { font-size: 11.400px; }

.findbar { height: 40px; background: #f9f9fa; display: flex; align-items: center; padding-left: 8px; color: #2c3034; white-space: nowrap; }
.find-input { width: 186px; height: 25px; background: #fff; border: 1px solid #c9c9cb; padding: 0 5px; font-size: 14px; line-height: 24px; }
.find-btn { width: 27px; height: 25px; border: 1px solid #c9c9cb; border-left: 0; display: flex; align-items: center; justify-content: center; background: #fbfbfb; color: #2c3034; }
.ic-chev { width: 11px; height: 7px; }
.flip { transform: scaleY(-1); }
.find-hl { margin-left: 6px; width: 104px; height: 30px; line-height: 30px; text-align: center; background: #dcdcde; border-radius: 3px; }
.find-opt { margin-left: 17px; }
.find-hl + .find-opt { margin-left: 13px; }
.find-info { margin-left: 17px; color: #8b8d90; }
.find-info2 { margin-left: 13px; }
.find-x { width: 10px; height: 10px; margin-left: 37px; }

.taskbar { height: 24px; background: linear-gradient(100deg, #1e2a2d 40%, #163034 47%, #2a2f2c 53%, #1d282b 60%); display: flex; align-items: center; color: #c4cacc; position: relative; white-space: nowrap; padding-left: 3px; }
.tk-dots { margin-left: 5px; width: 6px; color: #7d8587; font-size: 11px; }
.tk-app { display: flex; align-items: center; gap: 9px; position: relative; height: 24px; }
.tk-a1 { margin-left: 5px; width: 62px; gap: 8px; }
.tk-a2 { width: 60px; gap: 7px; }
.tk-a3 { width: 62px; }
.tk-a4 { width: 60px; gap: 8px; margin-left: 2px; }
.tk-a5 { width: 60px; gap: 9px; }
.tk-active { border-bottom: 2px solid #2eb398; padding-left: 3px; margin-left: -3px; }
.tk-num { position: absolute; left: 8px; top: 12px; width: 12px; height: 12px; border-radius: 50%; background: #d9dddd; color: #1c2326; font: bold 9px/12px "Noto Sans", sans-serif; text-align: center; }
.tray { display: flex; align-items: center; margin-left: 66px; }
.ti { width: 21px; height: 16px; flex: none; display: block; }
.g { margin-left: 2px; }
.tc { width: 14px; height: 6px; color: #ccd1d2; flex: none; display: block; }
.tw { width: 22px; height: 22px; margin-left: 2.500px; }
.t-bat { margin-left: 1.500px; }
.t-clip { margin-left: 4px; }
.t3 { margin-left: 3px; }
.t-snd { margin-left: 1px; }
.tr { width: 16px; }
.tr2 { margin-left: 8px; }
.tk-clock { margin-left: 2.500px; font-weight: 600; color: #c8ced0; width: 117px; }
.tk-win { margin-left: 3px; width: 40px; height: 22px; background: #d6d9d9; display: flex; align-items: center; justify-content: center; }
.tk-div { width: 1px; height: 24px; background: #3a4244; margin-left: 42px; }
```
